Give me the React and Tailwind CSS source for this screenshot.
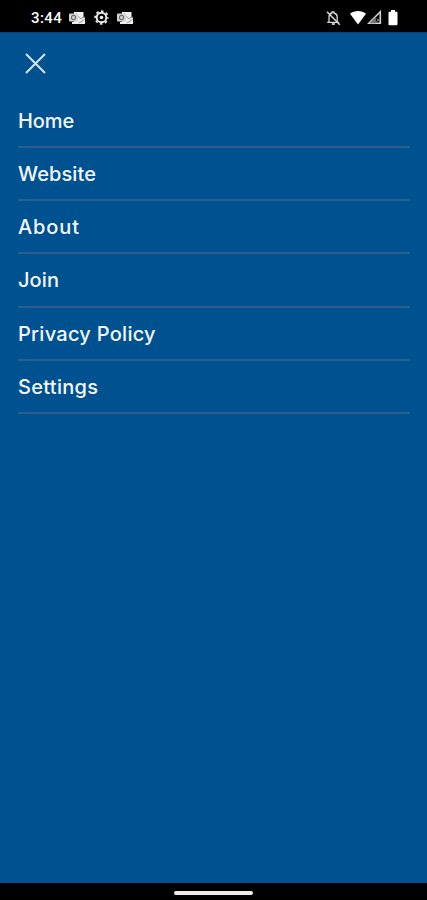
const MENU_ITEMS = [
  { label: 'Home', spacing: 'tracking-[-0.05px]' },
  { label: 'Website', spacing: 'tracking-[0.1px]' },
  { label: 'About', spacing: 'tracking-[0.9px]' },
  { label: 'Join', spacing: 'tracking-[0.1px]' },
  { label: 'Privacy Policy', spacing: 'tracking-[0.27px]' },
  { label: 'Settings', spacing: 'tracking-[0.3px]' },
]

function OutlookIcon() {
  return (
    <svg width="16" height="14" viewBox="0 0 16 14" fill="none">
      <path d="M5 1h9.5v5.5H16V13H3v-2h2z" fill="#eee" />
      <path d="M9 5.5l3 2.3 3.5-2.3M10 12l5.5-3.5" stroke="#777" strokeWidth="0.8" />
      <rect x="0" y="2.5" width="9" height="8" rx="1" fill="#d5d5d5" />
      <ellipse cx="4.5" cy="6.5" rx="2" ry="2.2" stroke="#666" strokeWidth="1.1" />
    </svg>
  )
}

function GearIcon() {
  return (
    <svg width="15" height="15" viewBox="0 0 15 15" fill="none" stroke="#eee">
      <circle cx="7.5" cy="7.5" r="6.4" strokeWidth="1.6" strokeDasharray="2.5 2.527" strokeDashoffset="1.25" />
      <circle cx="7.5" cy="7.5" r="4.8" strokeWidth="1.9" />
      <circle cx="7.5" cy="7.5" r="1.8" fill="#eee" stroke="none" />
    </svg>
  )
}

function BellOffIcon() {
  return (
    <svg width="15" height="16" viewBox="0 0 15 16" fill="none" stroke="#d8d8d8" strokeWidth="1.3">
      <path d="M3 12V7c0-2 1-3.5 3-4V1.8h2V3c2 .5 3.2 2 3.2 4v5M1.2 12.3H13" />
      <path d="M5.8 14h3" strokeWidth="1.8" />
      <path d="M1 1.8l12.8 13" strokeWidth="1.5" />
    </svg>
  )
}

function WifiIcon() {
  return (
    <svg width="18" height="15" viewBox="0 0 18 15" fill="#fff">
      <path d="M1 3.8C5.5.1 12.5.1 17 3.8L9 14.5z" />
    </svg>
  )
}

function SignalIcon() {
  return (
    <svg width="15" height="15" viewBox="0 0 15 15" fill="none">
      <path d="M13.3 1.8v11.5H1.8z" stroke="#d5d5d5" strokeWidth="1.6" />
      <path d="M8.8 6.8v6.4H2.4z" fill="#777" />
      <path d="M9.5 8.5l3.5 3.5M12.5 8.5l-3.5 4" stroke="#888" />
    </svg>
  )
}

function BatteryIcon() {
  return (
    <svg width="10" height="16" viewBox="0 0 10 16" fill="#fff">
      <path d="M3 0h4v1.7h1.5c.6 0 1 .4 1 1V14c0 .8-.4 1.2-1 1.2h-7c-.6 0-1-.4-1-1.2V2.7c0-.6.4-1 1-1H3z" />
    </svg>
  )
}

function StatusBar() {
  return (
    <header className="flex h-8 shrink-0 items-center justify-between bg-black pt-[3px] pr-[29px] pl-[31px] text-white">
      <div className="flex items-center">
        <span className="w-[38px] font-['Roboto','Liberation_Sans',sans-serif] text-[15px] leading-4 font-medium tracking-[0.4px]">
          3:44
        </span>
        <div className="flex items-center gap-[8.5px]">
          <OutlookIcon />
          <GearIcon />
          <OutlookIcon />
        </div>
      </div>
      <div className="flex items-center">
        <BellOffIcon />
        <div className="ml-[8px] flex items-center">
          <WifiIcon />
          <SignalIcon />
        </div>
        <div className="ml-[6px]">
          <BatteryIcon />
        </div>
      </div>
    </header>
  )
}

export default function App() {
  return (
    <div className="flex h-[900px] w-[427px] flex-col overflow-hidden bg-[#00518f] font-['Inter','Noto_Sans',sans-serif]">
      <StatusBar />

      <main className="flex-1 border-t border-[#06406f] pr-[17px] pl-[18px]">
        <button type="button" aria-label="Close menu" className="mt-[20px] ml-[7px] block">
          <svg width="21" height="21" viewBox="0 0 21 21" fill="none" stroke="#d5e3f5" strokeWidth="2">
            <path d="M1 1l19 19M20 1L1 20" />
          </svg>
        </button>

        <nav className="mt-[20.5px]">
          <ul>
            {MENU_ITEMS.map(item => (
              <li
                key={item.label}
                className="flex h-[53.25px] items-center border-b-2 border-[#2b608d] pt-[1px] text-[20px] leading-6 font-medium text-[#f4f7ff]"
              >
                <span className={item.spacing}>{item.label}</span>
              </li>
            ))}
          </ul>
        </nav>
      </main>

      <footer className="flex h-[17px] shrink-0 items-center justify-center bg-black pt-[2px]">
        <div className="h-[4px] w-[79px] rounded-full bg-[#eee]" />
      </footer>
    </div>
  )
}
